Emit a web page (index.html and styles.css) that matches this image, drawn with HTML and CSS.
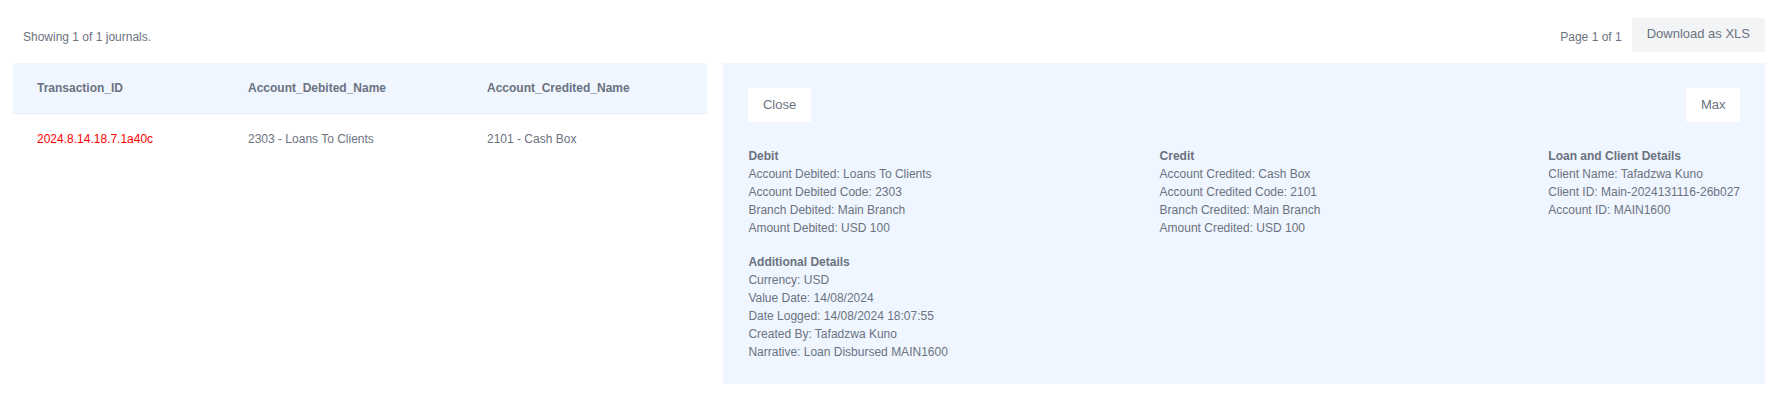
FILE: index.html
```html
<!DOCTYPE html>
<html lang="en">
<head>
<meta charset="utf-8">
<title>Journals</title>
<link rel="stylesheet" href="styles.css">
</head>
<body>
<div class="page">
  <div class="topbar">
    <span class="label">Showing 1 of 1 journals.</span>
    <div class="topbar-right">
      <span class="label">Page 1 of 1</span>
      <button class="btn btn-gray">Download as XLS</button>
    </div>
  </div>
  <div class="layout">
    <div class="table-wrap">
      <table class="journal-table">
        <colgroup>
          <col class="col-1">
          <col class="col-2">
          <col class="col-3">
        </colgroup>
        <thead>
          <tr>
            <th>Transaction_ID</th>
            <th>Account_Debited_Name</th>
            <th>Account_Credited_Name</th>
          </tr>
        </thead>
        <tbody>
          <tr>
            <td class="txn-id">2024.8.14.18.7.1a40c</td>
            <td>2303 - Loans To Clients</td>
            <td>2101 - Cash Box</td>
          </tr>
        </tbody>
      </table>
    </div>
    <div class="detail">
      <div class="detail-actions">
        <button class="btn btn-white">Close</button>
        <button class="btn btn-white">Max</button>
      </div>
      <div class="detail-cols">
        <div class="section">
          <div class="section-title">Debit</div>
          <div>Account Debited: Loans To Clients</div>
          <div>Account Debited Code: 2303</div>
          <div>Branch Debited: Main Branch</div>
          <div>Amount Debited: USD 100</div>
        </div>
        <div class="section">
          <div class="section-title">Credit</div>
          <div>Account Credited: Cash Box</div>
          <div>Account Credited Code: 2101</div>
          <div>Branch Credited: Main Branch</div>
          <div>Amount Credited: USD 100</div>
        </div>
        <div class="section">
          <div class="section-title">Loan and Client Details</div>
          <div>Client Name: Tafadzwa Kuno</div>
          <div>Client ID: Main-2024131116-26b027</div>
          <div>Account ID: MAIN1600</div>
        </div>
      </div>
      <div class="section section-extra">
        <div class="section-title">Additional Details</div>
        <div>Currency: USD</div>
        <div>Value Date: 14/08/2024</div>
        <div>Date Logged: 14/08/2024 18:07:55</div>
        <div>Created By: Tafadzwa Kuno</div>
        <div>Narrative: Loan Disbursed MAIN1600</div>
      </div>
    </div>
  </div>
</div>
</body>
</html>
```

FILE: styles.css
```css
* { box-sizing: border-box; }

html, body {
  margin: 0;
  background: #ffffff;
}

body {
  font-family: "Liberation Sans", Arial, Helvetica, sans-serif;
  font-size: 12px;
  line-height: 18px;
  color: #6b7280;
}

.page {
  padding: 18px 16px 0 13px;
}

.topbar {
  display: flex;
  justify-content: space-between;
  align-items: center;
  padding-left: 10px;
  height: 34px;
}

.topbar-right {
  display: flex;
  align-items: center;
  gap: 10px;
}

.label {
  padding-top: 4px;
}

.btn {
  font-family: "Liberation Sans", Arial, Helvetica, sans-serif;
  font-size: 13px;
  line-height: 18px;
  height: 34px;
  color: #6b7280;
  border: none;
  border-radius: 2px;
  cursor: pointer;
  margin: 0;
}

.btn-gray {
  background: #f3f4f6;
  padding: 0 15px 2px;
}

.btn-white {
  background: #ffffff;
  padding: 0 14.5px;
}

.layout {
  display: grid;
  grid-template-columns: 2fr 3fr;
  gap: 16px;
  margin-top: 11px;
  align-items: start;
}

.journal-table {
  width: 100%;
  border-collapse: collapse;
  table-layout: fixed;
}

.col-1 { width: 211px; }
.col-2 { width: 239px; }
.col-3 { width: auto; }

.journal-table th {
  background: #eff6ff;
  text-align: left;
  font-weight: bold;
  padding: 16px 24px;
  border-bottom: 1px solid #e6ecf3;
  color: #6b7280;
  white-space: nowrap;
}

.journal-table td {
  padding: 16px 24px;
  white-space: nowrap;
}

.journal-table .txn-id {
  color: #ff0000;
}

.detail {
  background: #eff6ff;
  padding: 25px 25px 23px;
}

.detail-actions {
  display: flex;
  justify-content: space-between;
}

.detail-cols {
  display: flex;
  justify-content: space-between;
  margin-top: 25px;
}

.section-title {
  font-weight: bold;
}

.section-extra {
  margin-top: 16px;
}
```
